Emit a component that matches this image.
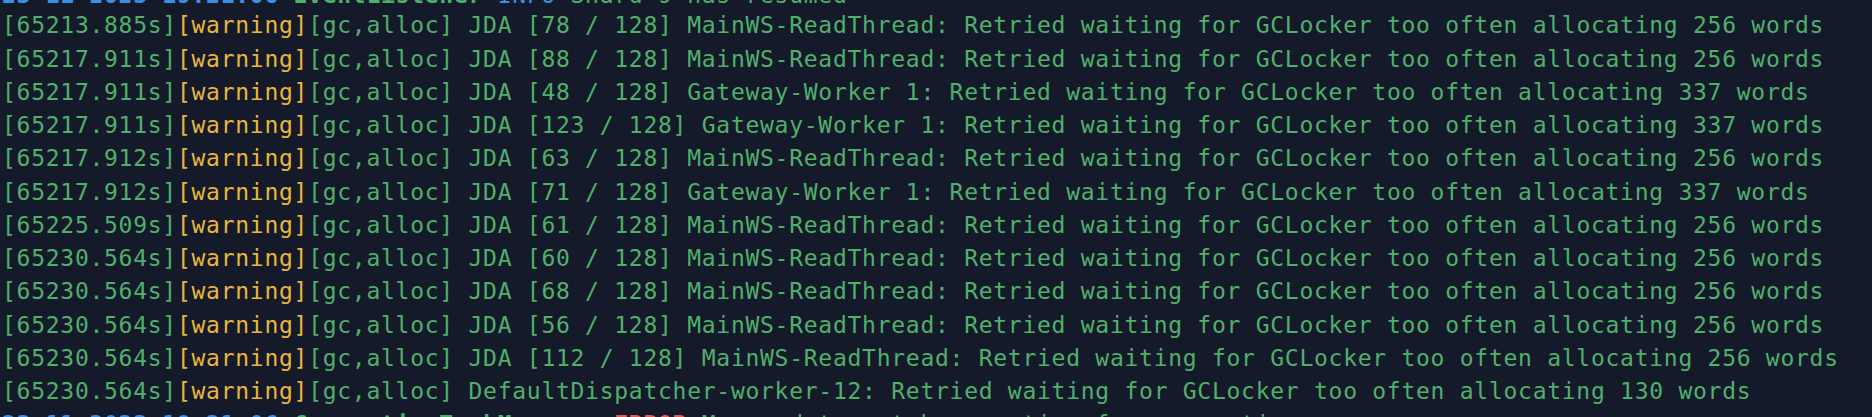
import React from "react";

const G = "text-[#4fb06b]";
const Y = "text-[#e8b63d]";
const B = "text-[#3c8fe2]";
const R = "text-[#e35d57]";

const rows = [
  ["65213.885s", "JDA [78 / 128] MainWS-ReadThread", "256"],
  ["65217.911s", "JDA [88 / 128] MainWS-ReadThread", "256"],
  ["65217.911s", "JDA [48 / 128] Gateway-Worker 1", "337"],
  ["65217.911s", "JDA [123 / 128] Gateway-Worker 1", "337"],
  ["65217.912s", "JDA [63 / 128] MainWS-ReadThread", "256"],
  ["65217.912s", "JDA [71 / 128] Gateway-Worker 1", "337"],
  ["65225.509s", "JDA [61 / 128] MainWS-ReadThread", "256"],
  ["65230.564s", "JDA [60 / 128] MainWS-ReadThread", "256"],
  ["65230.564s", "JDA [68 / 128] MainWS-ReadThread", "256"],
  ["65230.564s", "JDA [56 / 128] MainWS-ReadThread", "256"],
  ["65230.564s", "JDA [112 / 128] MainWS-ReadThread", "256"],
  ["65230.564s", "DefaultDispatcher-worker-12", "130"],
];

const lineCls = "h-[33.25px] leading-[33.25px] whitespace-pre";

export default function App() {
  return (
    <div
      className="w-[1872px] h-[417px] overflow-hidden bg-[#151a2a] text-[23px] tracking-[0.73px] antialiased"
      style={{ fontFamily: '"DejaVu Sans Mono", "Liberation Mono", monospace' }}
    >
      <div className="-mt-[21px] pl-[2px]">
        <div className="h-[30.25px] leading-[33.25px] whitespace-pre">
          <span className={`${B} font-bold`}>23-11-2023 19:21:06</span>
          <span className={G}> </span>
          <span className={`${G} font-bold`}>EventListener</span>
          <span className={B}> INFO</span>
          <span className={G}> Shard 9 has resumed</span>
        </div>
        {rows.map(([t, src, n], i) => (
          <div key={i} className={lineCls}>
            <span className={G}>[{t}]</span>
            <span className={Y}>[warning]</span>
            <span className={G}>
              [gc,alloc] {src}: Retried waiting for GCLocker too often allocating {n} words
            </span>
          </div>
        ))}
        <div className={lineCls}>
          <span className={`${B} font-bold`}>23-11-2023 19:21:06</span>
          <span className={G}> </span>
          <span className={`${G} font-bold`}>ConnectionTaskManager</span>
          <span className={`${R} font-bold`}> ERROR</span>
          <span className={G}> Managed to catch exception for connection</span>
        </div>
      </div>
    </div>
  );
}
